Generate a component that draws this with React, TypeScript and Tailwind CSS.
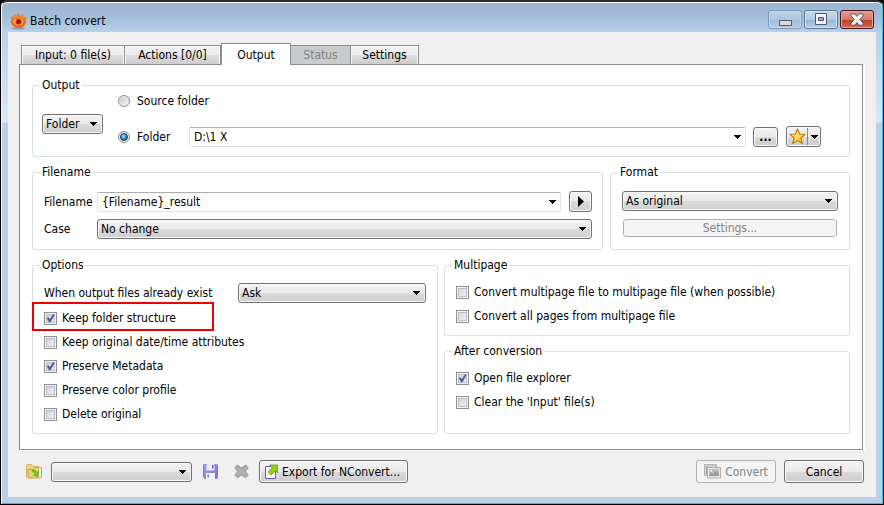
import React from "react";

const raised =
  "rounded-[3px] border border-[#707070] bg-[linear-gradient(#f3f3f3_0%,#e9e9e9_50%,#dbdbdb_50%,#cecece_100%)] shadow-[inset_0_0_0_1px_#f8f8f8]";
const disabledButton =
  "rounded-[3px] border border-[#adb2b5] bg-[#f4f4f4] text-[#838383]";

function Arrow() {
  return (
    <svg width="7" height="4" viewBox="0 0 7 4" shapeRendering="crispEdges" aria-hidden="true">
      <path d="M0 0h7v1h-1v1h-1v1h-1v1h-1v-1h-1v-1h-1v-1h-1z" fill="#000" />
    </svg>
  );
}

function Select({
  id,
  label,
  options,
  className = "",
}: {
  id: string;
  label?: string;
  options: string[];
  className?: string;
}) {
  return (
    <div className={"grid min-w-0 items-center " + className}>
      <select
        id={id}
        aria-label={label}
        className={"col-start-1 row-start-1 h-5 w-full appearance-none pr-4 pl-[3px] text-[12px] leading-4 text-black " + raised}
      >
        {options.map((o) => (
          <option key={o}>{o}</option>
        ))}
      </select>
      <span className="pointer-events-none col-start-1 row-start-1 mr-[6px] justify-self-end">
        <Arrow />
      </span>
    </div>
  );
}

function Combo({ id, value, label }: { id: string; value: string; label?: string }) {
  return (
    <div className="flex h-5 min-w-0 flex-1 items-center rounded-[2px] border border-[#e2e3ea] border-t-[#abadb3] bg-white">
      <input
        id={id}
        aria-label={label}
        defaultValue={value}
        className="h-full min-w-0 flex-1 bg-transparent pl-1 text-[12px] leading-4 outline-none"
      />
      <button aria-label="Show list" className="flex h-full w-4 items-center justify-center">
        <Arrow />
      </button>
    </div>
  );
}

function Check({ label, checked = false, outlined = false }: { label: string; checked?: boolean; outlined?: boolean }) {
  return (
    <div className="relative flex h-6 items-center">
      {outlined && (
        <span className="pointer-events-none absolute -top-1 -left-3 h-[29px] w-[182px] border-2 border-[#f00000]" />
      )}
      <label className="flex items-center gap-[5px]">
        <span className="grid size-[13px] place-items-center">
          <input
            type="checkbox"
            defaultChecked={checked}
            className="peer col-start-1 row-start-1 size-[13px] appearance-none border border-[#8e8f8f] bg-linear-to-br from-[#c9cdd2] to-[#f8f8f8] shadow-[inset_0_0_0_1px_#f4f4f4,inset_0_0_0_2px_#bcc0c6]"
          />
          <svg
            className="pointer-events-none invisible col-start-1 row-start-1 peer-checked:visible"
            width="13"
            height="13"
            viewBox="0 0 13 13"
            aria-hidden="true"
          >
            <path d="M3 6.2 4.4 5.6 5.8 7.6 9 2.6 10.3 3 6.4 10H5.2z" fill="#42549c" stroke="#42549c" strokeWidth=".4" />
          </svg>
        </span>
        <span className="leading-4">{label}</span>
      </label>
    </div>
  );
}

function Radio({ id, label, checked = false }: { id: string; label: string; checked?: boolean }) {
  return (
    <label htmlFor={id} className="flex items-center gap-[7px]">
      <span className="grid size-3 place-items-center">
        <input
          id={id}
          type="radio"
          name="target"
          defaultChecked={checked}
          className="peer col-start-1 row-start-1 size-3 appearance-none rounded-full border border-[#8e8f8f] bg-linear-to-br from-[#c4c8cc] to-[#f6f6f6] shadow-[inset_0_0_0_1px_#eeeeee]"
        />
        <span className="pointer-events-none invisible col-start-1 row-start-1 size-2 rounded-full border border-[#17395a] bg-radial-[at_40%_35%] from-[#9fe4fb] via-[#2f93bd] to-[#123c5e] peer-checked:visible" />
      </span>
      <span className="leading-4">{label}</span>
    </label>
  );
}

function Group({ title, className = "", children }: { title: string; className?: string; children: React.ReactNode }) {
  return (
    <fieldset className={"min-w-0 rounded-[3px] border border-[#d5dfe5] " + className}>
      <legend className="ml-[7px] h-4 px-[2px] leading-4">{title}</legend>
      {children}
    </fieldset>
  );
}

function AppLogo() {
  return (
    <svg width="17" height="17" viewBox="0 0 17 17" aria-hidden="true">
      <defs>
        <linearGradient id="logo" x1="0" y1="0" x2="0" y2="1">
          <stop offset="0" stopColor="#f48a2c" />
          <stop offset="1" stopColor="#ea640f" />
        </linearGradient>
      </defs>
      <ellipse cx="8.5" cy="15.4" rx="6.5" ry="1.2" fill="#6d7f96" opacity=".6" />
      <path
        d="M.3 4.2 2.2 3.2 3.2 4.6 3.6 1.6 5.6 1.4 6.2 3.4 7.4.6 9.6.6 10.2 3.4 12 1.2 13.8 2 13.4 4.6 15.6 3.6 16.8 5 15.8 6.8 16.4 8.8Q15.2 14.6 8.5 15 2 14.6.6 9L1.4 6.6z"
        fill="url(#logo)"
      />
      <path d="M3.2 8.4Q5.2 5.4 8.6 5.4T13.8 8.4Q12.2 12.2 8.5 12.2T3.2 8.4z" fill="#f6ad74" />
      <circle cx="8.6" cy="8.7" r="2.9" fill="#c42a0c" />
      <circle cx="8.7" cy="8.8" r="1.4" fill="#8e1605" />
    </svg>
  );
}

function StarIcon() {
  return (
    <svg width="17" height="17" viewBox="0 0 17 17" aria-hidden="true">
      <defs>
        <linearGradient id="star" x1="0" y1="0" x2="1" y2="1">
          <stop offset="0" stopColor="#fff6a8" />
          <stop offset="1" stopColor="#fbb812" />
        </linearGradient>
      </defs>
      <path
        d="M8.5 1 10.6 6 16 6.4 11.9 10 13.3 15.5 8.5 12.6 3.7 15.5 5.1 10 1 6.4 6.4 6z"
        fill="url(#star)"
        stroke="#bd7414"
        strokeWidth="1.1"
        strokeLinejoin="round"
      />
    </svg>
  );
}

function FolderIcon() {
  return (
    <svg width="18" height="17" viewBox="0 0 18 17" aria-hidden="true">
      <defs>
        <linearGradient id="folder" x1="0" y1="0" x2="1" y2="1">
          <stop offset="0" stopColor="#fdf3bd" />
          <stop offset="1" stopColor="#e3bd4c" />
        </linearGradient>
      </defs>
      <path d="M1.5 2.5Q1.5 1.5 2.5 1.5H6.5L8 3.5H13.5V14.5H2.5Q1.5 14.5 1.5 13.5z" fill="#edd27a" stroke="#d3b35c" />
      <path d="M3 6.5H8L9.5 4.5H16.5V14Q16.5 15 15.5 15H4Q3 15 3 14z" fill="url(#folder)" stroke="#cda84a" />
      <path d="M7 6.8Q11 6.4 11.8 9.2L13.6 8.6 13 13.6 8.4 12.2 10 10.8Q9.4 8.6 7 8.8z" fill="#63cf1a" stroke="#48a514" strokeWidth=".5" />
    </svg>
  );
}

function SaveIcon() {
  return (
    <svg width="15" height="15" viewBox="0 0 15 15" aria-hidden="true">
      <defs>
        <linearGradient id="disk" x1="0" y1="0" x2="1" y2="1">
          <stop offset="0" stopColor="#a3a3ea" />
          <stop offset="1" stopColor="#7272cc" />
        </linearGradient>
      </defs>
      <path d="M.5 1.5Q.5.5 1.5.5H13.5Q14.5.5 14.5 1.5V13.5Q14.5 14.5 13.5 14.5H2L.5 13z" fill="url(#disk)" stroke="#7a7acc" />
      <path d="M3.5 0H11.5V6.5H3.5z" fill="#eceefb" />
      <path d="M9 1H10.6V4.6H9z" fill="#6868bc" />
      <path d="M3 9H12V15H3z" fill="#f4f4fc" />
      <path d="M4.4 10.4H6V13.6H4.4z" fill="#7a7ac8" />
    </svg>
  );
}

function DeleteIcon() {
  return (
    <svg width="15" height="15" viewBox="0 0 15 15" aria-hidden="true">
      <path
        d="M3.5 1.2 7.5 4.2 11.5 1.2 14 3.8 11.2 7.4 14 11 11.5 13.6 7.5 10.8 3.5 13.6 1 11 3.8 7.4 1 3.8z"
        fill="#adadad"
        stroke="#a2a2a2"
        strokeWidth="1.2"
        strokeLinejoin="round"
      />
    </svg>
  );
}

function ExportIcon() {
  return (
    <svg width="15" height="16" viewBox="0 0 15 16" aria-hidden="true">
      <path d="M1.5 2.5H8L11.5 7V14.5H1.5z" fill="#fbfcff" stroke="#5763a8" />
      <path d="M5.6 1H13.5V8.6L11.2 6.8 7 11 4 8.2 8.2 3.8z" fill="#94d40f" stroke="#6a9e12" strokeWidth=".8" strokeLinejoin="round" />
    </svg>
  );
}

function ConvertIcon() {
  return (
    <svg width="17" height="15" viewBox="0 0 17 15" aria-hidden="true">
      <path d="M.5.5H12.5V11.5H.5z" fill="#cdcdcd" stroke="#b4b4b4" />
      <path d="M2 2.5H4V10H2z" fill="#a4a4a4" />
      <path d="M3.5 3.5H16.5V14H3.5z" fill="#e6e6e6" stroke="#b0b0b0" />
      <path d="M5 5H15V12H5z" fill="#bdbdbd" />
      <path d="M5 12 7.5 8.5 9.5 10.5 12 7 15 9.5V12z" fill="#989898" />
      <circle cx="7" cy="6.8" r="1" fill="#eee" />
    </svg>
  );
}

function CaptionButton({ label, tone, children }: { label: string; tone: string; children: React.ReactNode }) {
  return (
    <button aria-label={label} className={"flex h-[19px] w-[34px] items-center justify-center rounded-[3px] border " + tone}>
      {children}
    </button>
  );
}

function Tabs() {
  const idle =
    "h-[19px] border border-b-0 border-[#898c95] bg-[linear-gradient(#f3f3f3_0%,#ebebeb_50%,#dddddd_50%,#cdcdcd_100%)] shadow-[inset_1px_1px_0_#fafafa,inset_-1px_0_0_#fafafa]";
  return (
    <div role="tablist" className="flex items-end pl-0.5">
      <button role="tab" className={"w-[104px] " + idle}>Input: 0 file(s)</button>
      <button role="tab" className={"w-24 border-l-0 " + idle}>Actions [0/0]</button>
      <button role="tab" aria-selected="true" className="z-10 -mb-px h-[22px] w-[70px] border border-b-0 border-[#898c95] bg-white">
        Output
      </button>
      <button role="tab" disabled className="h-[19px] w-[59px] border-t border-[#898c95] bg-[#c9cacb] text-[#838383]">
        Status
      </button>
      <button role="tab" className={"w-[69px] " + idle}>Settings</button>
    </div>
  );
}

export default function App() {
  return (
    <div className="flex min-h-screen flex-col bg-black pr-px pb-px pl-px font-['DejaVu_Sans_Condensed','DejaVu_Sans',sans-serif] text-[12px] leading-4 text-black">
      <main className="flex flex-1 flex-col rounded-t-[6px] border border-t-2 border-[#f4f9fd] border-t-[#2b2b33] border-r-[#35c5ea] border-b-[#22c3e6] bg-[linear-gradient(#99b4d1_0px,#a4bfdb_16px,#b9d1ea_31px,#dce8f5_120px,#b9d1ea_121px)] px-1.5 pb-1.5 shadow-[inset_0_1px_0_#ffffff]">
        <header className="flex h-[30px] items-center">
          <div className="flex flex-1 items-center gap-[3px] pt-2 pl-0.5">
            <AppLogo />
            <h1>Batch convert</h1>
          </div>
          <div className="flex gap-0.5 self-start pt-2 pr-0.5">
            <CaptionButton
              label="Minimize"
              tone="border-[#7f96b5] bg-[linear-gradient(#bdd0e6_0%,#b0c7e0_50%,#9ebad8_50%,#b4cce6_100%)] shadow-[inset_0_0_0_1px_#c6d8eb]"
            >
              <svg width="13" height="15" viewBox="0 0 13 15" aria-hidden="true">
                <path d="M.5 8.5h12v5H.5z" fill="#dcdcdc" stroke="#545a6a" />
              </svg>
            </CaptionButton>
            <CaptionButton
              label="Maximize"
              tone="border-[#5f7898] bg-[linear-gradient(#c8d9eb_0%,#b5cae2_50%,#98b4d2_50%,#b4cfe9_100%)] shadow-[inset_0_0_0_1px_#d3e2f1]"
            >
              <svg width="12" height="13" viewBox="0 0 12 13" aria-hidden="true">
                <path d="M.5.5h11v11H.5z" fill="#f2f2f2" stroke="#545a6a" />
                <path d="M3.5 4.5h5v3h-5z" fill="#90add0" stroke="#545a6a" />
              </svg>
            </CaptionButton>
            <CaptionButton
              label="Close"
              tone="border-[#431422] bg-[linear-gradient(#e3a094_0%,#d8776a_50%,#b93f27_50%,#cf6b50_100%)] shadow-[inset_0_0_0_1px_#e2a79c]"
            >
              <svg width="14" height="13" viewBox="0 0 14 13" aria-hidden="true">
                <path
                  d="M1 .8H5L7 3.5 9 .8H13V2.8L9.8 6.4 13 10V12.2H9L7 9.4 5 12.2H1V10L4.2 6.4 1 2.8z"
                  fill="#f4f4f4"
                  stroke="#565b6b"
                  strokeLinejoin="round"
                />
              </svg>
            </CaptionButton>
          </div>
        </header>

        <div className="flex flex-1 flex-col bg-[#f0f0f0] pt-[11px] pr-3 pl-[11px]">
          <Tabs />
          <section className="mr-px flex flex-1 flex-col gap-[7px] border border-[#898c95] bg-white px-3 pt-3 pb-[15px] shadow-[2px_1px_0_#ffffff]">
            <Group title="Output">
              <div className="flex items-center pr-7 pb-[9px] pl-[9px]">
                <Select id="mode" label="Output mode" options={["Folder"]} className="w-[61px] pt-2" />
                <div className="ml-[15px] flex min-w-0 flex-1 flex-col gap-[17px]">
                  <Radio id="source" label="Source folder" />
                  <div className="flex items-center">
                    <div className="w-[71px]">
                      <Radio id="folder" label="Folder" checked />
                    </div>
                    <Combo id="path" label="Folder path" value="D:\1 X" />
                    <button aria-label="Browse" className={"mr-2 ml-[7px] h-5 w-[25px] font-bold " + raised}>
                      ...
                    </button>
                    <div className={"flex h-[21px] w-[35px] items-center " + raised}>
                      <button aria-label="Favorites" className="flex w-[21px] items-center justify-center border-r border-[#8a8a8a]">
                        <StarIcon />
                      </button>
                      <button aria-label="Favorites list" className="flex h-full flex-1 items-center justify-center">
                        <Arrow />
                      </button>
                    </div>
                  </div>
                </div>
              </div>
            </Group>

            <div className="flex gap-[7px]">
              <Group title="Filename" className="flex-1">
                <div className="grid grid-cols-[53px_1fr] items-center gap-y-[7px] pt-[11px] pr-2.5 pb-2.5 pl-[11px]">
                  <label htmlFor="filename">Filename</label>
                  <div className="flex items-center gap-2">
                    <Combo id="filename" value="{Filename}_result" />
                    <button aria-label="Insert field" className={"flex h-[21px] w-[23px] items-center justify-center " + raised}>
                      <svg width="6" height="11" viewBox="0 0 6 11" aria-hidden="true">
                        <path d="M0 0 6 5.5 0 11z" fill="#000" />
                      </svg>
                    </button>
                  </div>
                  <label htmlFor="case">Case</label>
                  <Select id="case" options={["No change"]} />
                </div>
              </Group>
              <Group title="Format" className="w-[240px]">
                <div className="flex flex-col gap-2 px-[11px] pt-[11px]">
                  <Select id="format" label="Format" options={["As original"]} />
                  <button disabled className={"mx-px h-[18px] " + disabledButton}>
                    Settings...
                  </button>
                </div>
              </Group>
            </div>

            <div className="grid flex-1 grid-cols-2 gap-1.5">
              <Group title="Options">
                <div className="px-[11px] pt-[10px] pb-[7px]">
                  <div className="mb-[3px] flex items-center">
                    <label htmlFor="exists" className="w-[194px]">
                      When output files already exist
                    </label>
                    <Select id="exists" options={["Ask"]} className="flex-1" />
                  </div>
                  <Check label="Keep folder structure" checked outlined />
                  <Check label="Keep original date/time attributes" />
                  <Check label="Preserve Metadata" checked />
                  <Check label="Preserve color profile" />
                  <Check label="Delete original" />
                </div>
              </Group>
              <div className="flex flex-col gap-[7px]">
                <Group title="Multipage">
                  <div className="px-[11px] py-[7px]">
                    <Check label="Convert multipage file to multipage file (when possible)" />
                    <Check label="Convert all pages from multipage file" />
                  </div>
                </Group>
                <Group title="After conversion" className="flex-1">
                  <div className="px-[11px] py-[7px]">
                    <Check label="Open file explorer" checked />
                    <Check label="Clear the 'Input' file(s)" />
                  </div>
                </Group>
              </div>
            </div>
          </section>

          <footer className="flex items-center pt-[10px] pb-[14px] pl-[6px]">
            <button aria-label="Load preset">
              <FolderIcon />
            </button>
            <Select id="preset" label="Preset" options={[""]} className="mr-[11px] ml-2 w-[141px]" />
            <button aria-label="Save preset">
              <SaveIcon />
            </button>
            <button aria-label="Delete preset" className="mr-2.5 ml-4">
              <DeleteIcon />
            </button>
            <button className={"flex h-[23px] w-[149px] items-center gap-[3px] pl-1 whitespace-nowrap " + raised}>
              <ExportIcon />
              Export for NConvert...
            </button>
            <div className="ml-auto flex gap-2">
              <button disabled className={"flex h-[23px] w-20 items-center justify-center gap-1 " + disabledButton}>
                <ConvertIcon />
                Convert
              </button>
              <button className={"h-[23px] w-20 " + raised}>Cancel</button>
            </div>
          </footer>
        </div>
      </main>
    </div>
  );
}
